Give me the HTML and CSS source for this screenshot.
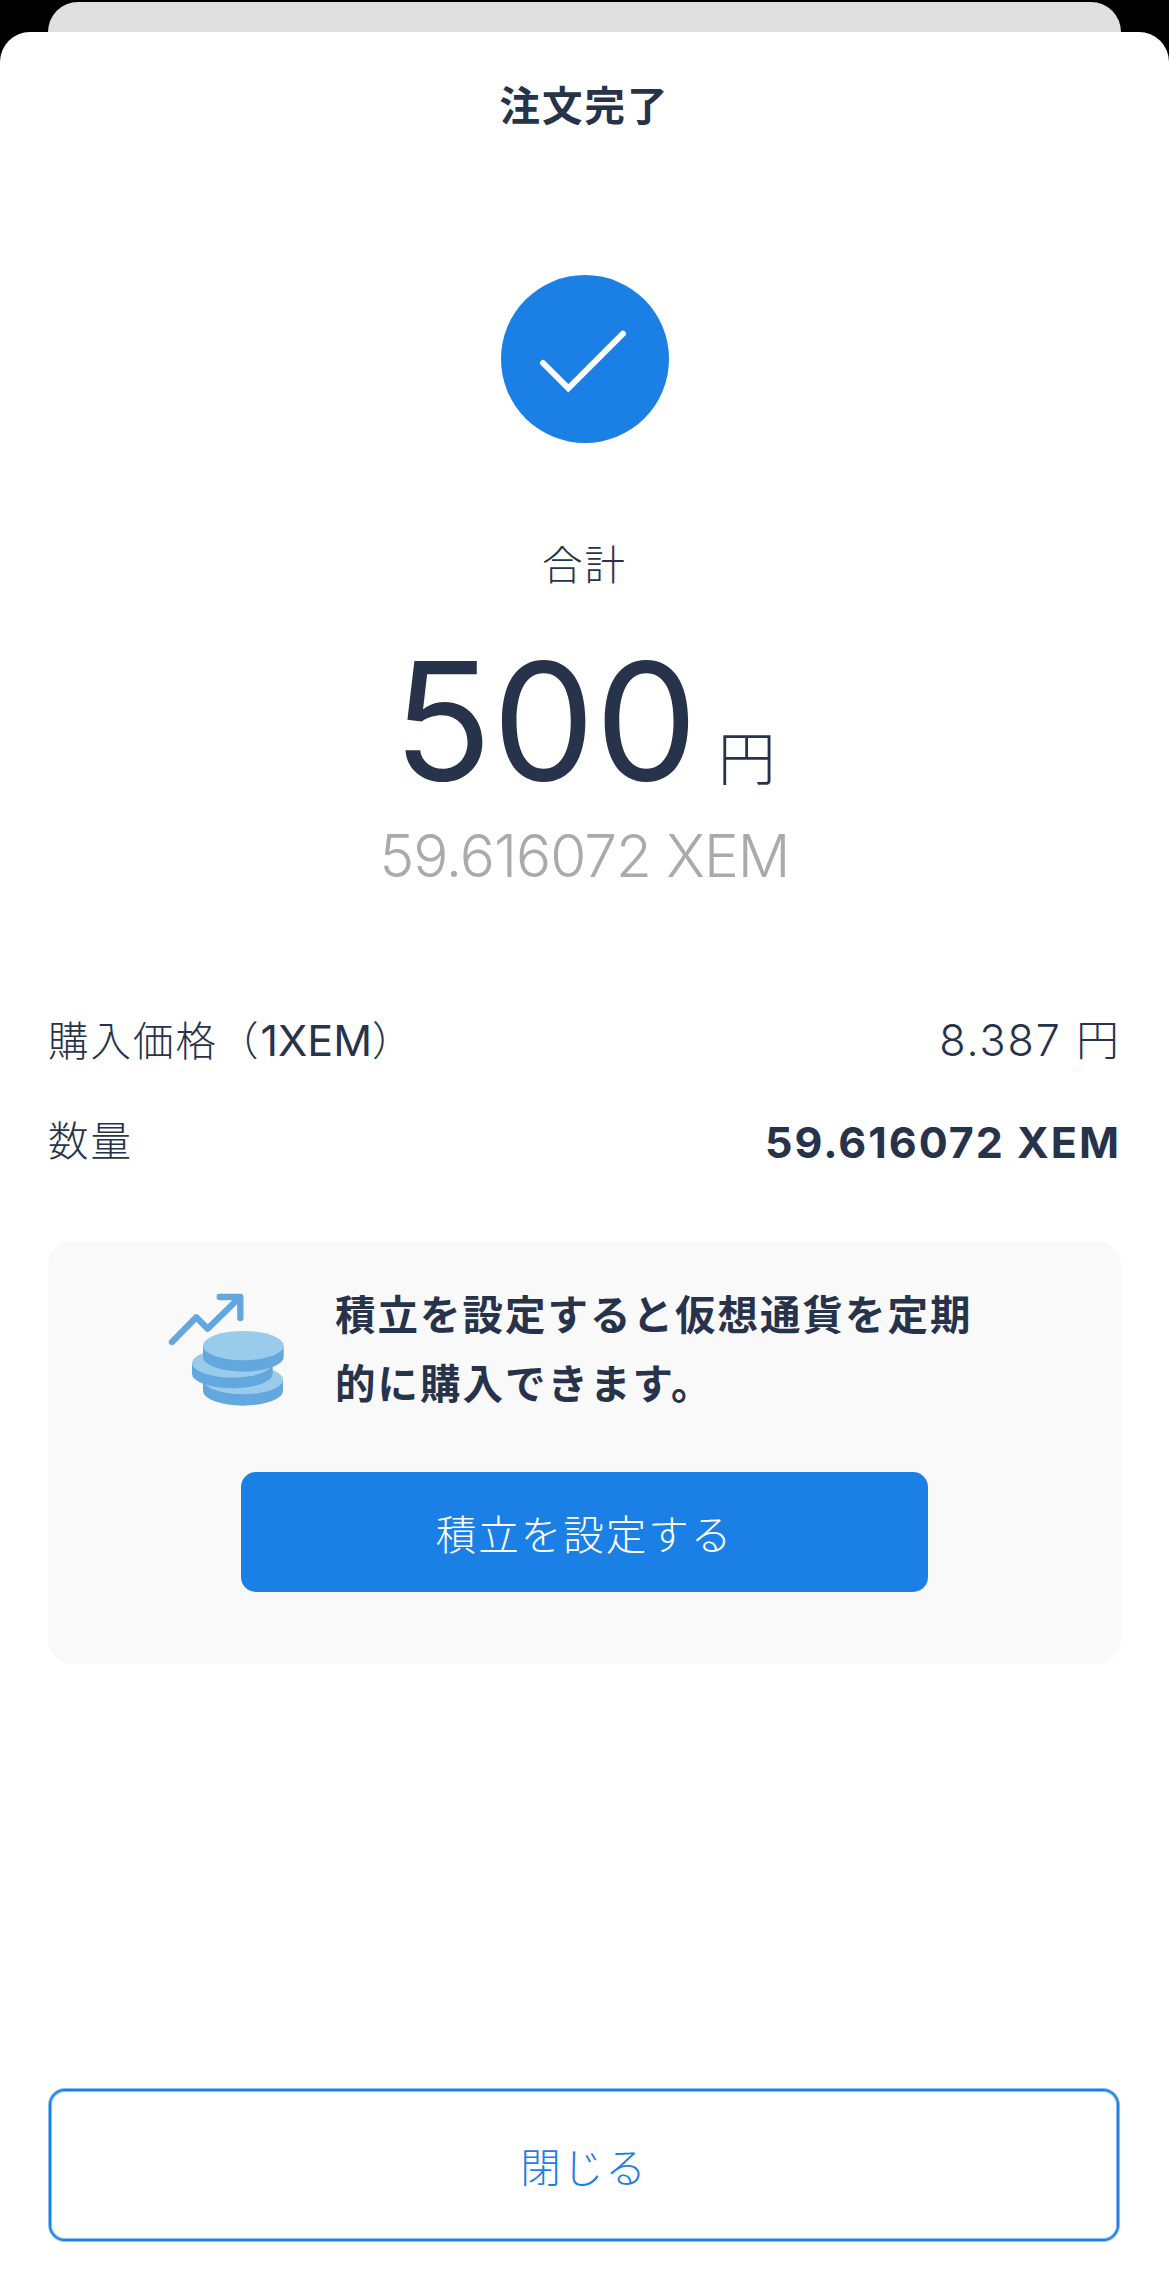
FILE: index.html
```html
<!DOCTYPE html>
<html lang="ja">
<head>
<meta charset="utf-8">
<title>注文完了</title>
<link rel="stylesheet" href="styles.css">
</head>
<body>
<div class="backdrop"></div>
<main class="sheet">
  <h1 class="title">注文完了</h1>
  <svg class="check" viewBox="0 0 504 504" aria-hidden="true">
    <circle cx="252" cy="252" r="252" fill="#1a80e5"/>
    <path d="M126 264l76 76 164-164" fill="none" stroke="#fff" stroke-width="18" stroke-linecap="round"/>
  </svg>
  <p class="total-label">合計</p>
  <p class="total"><span class="amount">500</span><span class="unit">円</span></p>
  <p class="crypto">59.616072 XEM</p>
  <dl class="details">
    <div class="row"><dt>購入価格（<span class="pair">1XEM</span>）</dt><dd class="price">8.387 円</dd></div>
    <div class="row"><dt>数量</dt><dd class="quantity">59.616072 XEM</dd></div>
  </dl>
  <section class="promo">
    <div class="promo-head">
      <svg class="coins" viewBox="39 39 354 342" aria-hidden="true">
        <g fill="#62a8de">
          <path d="M144 299v34a120 44 0 0 0 240 0v-34z"/>
          <ellipse cx="264" cy="299" rx="120" ry="44" fill="#9bcbeb"/>
          <path d="M111 249v32a121 44 0 0 0 242 0v-32z"/>
          <ellipse cx="232" cy="249" rx="121" ry="44" fill="#9bcbeb"/>
          <path d="M144 197v34a121 44 0 0 0 242 0v-34z"/>
          <ellipse cx="265" cy="197" rx="121" ry="44" fill="#9bcbeb"/>
        </g>
        <path d="M51 186l73-74 34 34 94-92M194 51h62v63" fill="none" stroke="#62a8de" stroke-width="19" stroke-linecap="round" stroke-linejoin="round"/>
      </svg>
      <p class="promo-text">積立を設定すると仮想通貨を定期<br>的に購入できます。</p>
    </div>
    <button class="primary">積立を設定する</button>
  </section>
  <button class="close">閉じる</button>
</main>
</body>
</html>
```
FILE: styles.css
```css
* {
  box-sizing: border-box;
}

body {
  margin: 0;
  padding-top: 2px;
  height: 2283px;
  background: #000;
  color: #27334b;
  font-family: Inter, "Noto Sans CJK JP", sans-serif;
  font-size: 40.5px;
  letter-spacing: 2px;
  display: flex;
  flex-direction: column;
}

h1, p, dl, dd {
  margin: 0;
}

.backdrop {
  height: 30px;
  margin: 0 48px;
  border-radius: 30px 30px 0 0;
  background: #e0e0e0;
}

.sheet {
  flex: 1;
  background: #fff;
  border-radius: 30px 30px 0 0;
  padding: 45px 48px 0;
  display: flex;
  flex-direction: column;
  align-items: center;
}

.title {
  font-size: 40.5px;
  font-weight: 600;
  line-height: 60px;
}

.check {
  width: 168px;
  height: 168px;
  margin-top: 138px;
}

.total-label {
  margin-top: 93px;
  line-height: 60px;
  font-weight: 300;
}

.total {
  margin-top: 45px;
  height: 160px;
  line-height: 160px;
  display: flex;
  align-items: baseline;
  gap: 20px;
}

.amount {
  font-size: 163px;
  letter-spacing: 0;
}

.unit {
  font-size: 58px;
  font-weight: 300;
  letter-spacing: 0;
}

.crypto {
  margin-top: 15px;
  line-height: 80px;
  font-size: 58.5px;
  font-weight: 300;
  letter-spacing: -1px;
  color: #aaa;
}

.details {
  align-self: stretch;
  margin-top: 114px;
}

.row {
  display: flex;
  justify-content: space-between;
  height: 60px;
  line-height: 60px;
  font-weight: 300;
}

.row + .row {
  margin-top: 42px;
}

.pair,
.price,
.quantity {
  font-size: 43px;
}

.pair {
  font-weight: 400;
  letter-spacing: 0;
}

.quantity {
  font-weight: 700;
}

.promo {
  align-self: stretch;
  height: 423px;
  margin-top: 69px;
  padding-top: 41px;
  border-radius: 24px;
  background: #f9f9f9;
}

.promo-head {
  display: flex;
  padding-left: 120px;
}

.coins {
  width: 118px;
  height: 114px;
  margin-top: 11px;
}

.promo-text {
  margin-left: 49px;
  line-height: 68.5px;
  font-weight: 600;
  white-space: nowrap;
}

button {
  display: block;
  padding: 0;
  border: 0;
  font: 300 40.5px Inter, "Noto Sans CJK JP", sans-serif;
  letter-spacing: 2px;
}

.primary {
  width: 687px;
  height: 120px;
  margin: 53px auto 0 193px;
  border-radius: 15px;
  background: #1a80e5;
  color: #fff;
}

.close {
  align-self: stretch;
  height: 152px;
  margin: 425px 2px 0 1px;
  border: 2px solid #1a80e5;
  border-radius: 16px;
  box-shadow: 0 0 0 1px #1a80e580, inset 0 0 0 1px #1a80e580;
  background: #fff;
  color: #1a80e5;
}
```
